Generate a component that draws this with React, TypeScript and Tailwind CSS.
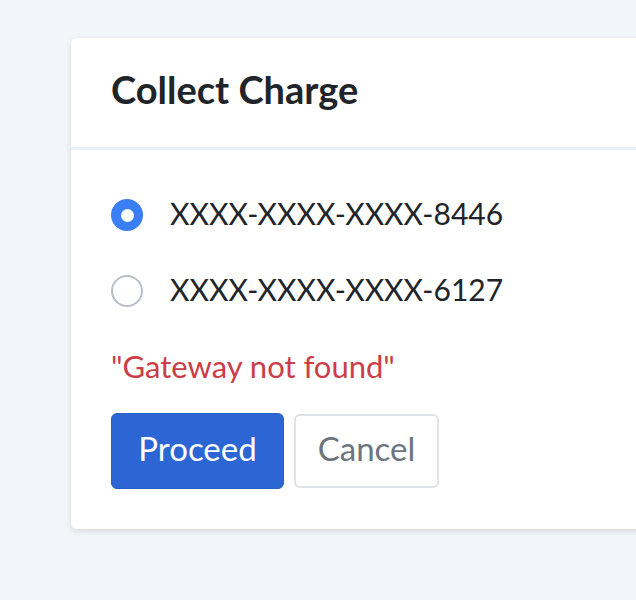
import React, { useState } from 'react';

const cards = ['XXXX-XXXX-XXXX-8446', 'XXXX-XXXX-XXXX-6127'];

const App: React.FC = () => {
  const [selected, setSelected] = useState(0);

  return (
    <div
      className="min-h-[600px] bg-[#f2f5f9] pt-[38px] pl-[71px] overflow-hidden"
      style={{ fontFamily: 'Lato, "Open Sans", sans-serif' }}
    >
      <div className="w-[640px] bg-white rounded-md shadow-[0_2px_6px_rgba(0,0,0,0.12)]">
        <div className="h-[112px] px-10 pb-[6px] flex items-center border-b-[3px] border-[#ebf1f8]">
          <h2 className="text-[38px] font-bold text-[#212529]">Collect Charge</h2>
        </div>

        <div className="px-10 pt-[46px] pb-[40px]">
          <div className="flex flex-col gap-[38px]">
            {cards.map((card, i) => (
              <label key={card} className="flex items-center h-[38px] cursor-pointer" onClick={() => setSelected(i)}>
                {selected === i ? (
                  <span className="w-8 h-8 rounded-full bg-[#3b7ff6] flex items-center justify-center">
                    <span className="w-[13px] h-[13px] rounded-full bg-white" />
                  </span>
                ) : (
                  <span className="w-8 h-8 rounded-full border-2 border-[#b9bfc6] bg-white" />
                )}
                <span className="ml-[27px] pb-1 text-[30px] text-[#212529]">{card}</span>
              </label>
            ))}
          </div>

          <p className="mt-[38px] h-10 leading-9 text-[31px] text-[#cc3d45]">"Gateway not found"</p>

          <div className="mt-[25px] flex gap-[10px]">
            <button className="w-[173px] h-[76px] pb-1 rounded-md bg-[#2c66d4] border border-[#2a5fc4] text-white text-[33px]">
              Proceed
            </button>
            <button className="w-[145px] h-[74px] mt-px pb-1 rounded-md bg-white border-2 border-[#dfe2e6] text-[#6c757d] text-[33px]">
              Cancel
            </button>
          </div>
        </div>
      </div>
    </div>
  );
};

export default App;
